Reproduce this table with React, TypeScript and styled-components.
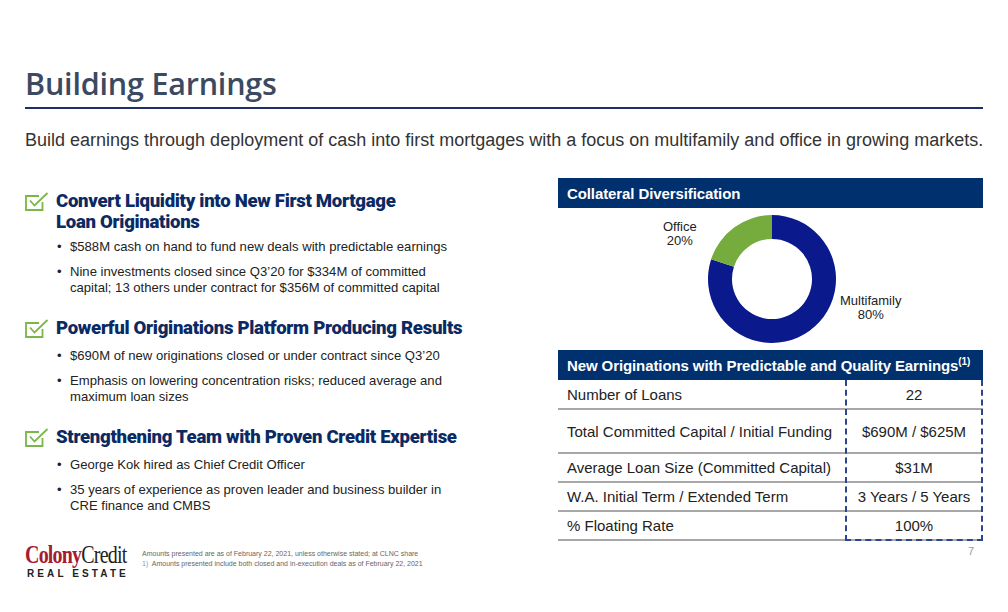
import React from "react";
import styled, { createGlobalStyle } from "styled-components";

const GlobalStyle = createGlobalStyle`
  html, body {
    margin: 0;
    padding: 0;
    background: #ffffff;
  }
  body {
    font-family: "Liberation Sans", Arial, sans-serif;
  }
`;

const NAVY = "#0b2a63";
const BAR = "#00306e";
const GREEN = "#7ab648";

const sections = [
  {
    title: ["Convert Liquidity into New First Mortgage", "Loan Originations"],
    bullets: [
      ["$588M cash on hand to fund new deals with predictable earnings"],
      [
        "Nine investments closed since Q3\u201920 for $334M of committed",
        "capital; 13 others under contract for $356M of committed capital",
      ],
    ],
  },
  {
    title: ["Powerful Originations Platform Producing Results"],
    bullets: [
      ["$690M of new originations closed or under contract since Q3\u201920"],
      [
        "Emphasis on lowering concentration risks; reduced average and",
        "maximum loan sizes",
      ],
    ],
  },
  {
    title: ["Strengthening Team with Proven Credit Expertise"],
    bullets: [
      ["George Kok hired as Chief Credit Officer"],
      [
        "35 years of experience as proven leader and business builder in",
        "CRE finance and CMBS",
      ],
    ],
  },
];

const rows = [
  { label: "Number of Loans", value: "22", height: 30 },
  { label: "Total Committed Capital / Initial Funding", value: "$690M / $625M", height: 44 },
  { label: "Average Loan Size (Committed Capital)", value: "$31M", height: 29 },
  { label: "W.A. Initial Term / Extended Term", value: "3 Years / 5 Years", height: 29 },
  { label: "% Floating Rate", value: "100%", height: 29 },
];

const CheckIcon = () => (
  <svg width="24" height="19" viewBox="0 0 24 19" fill="none">
    <path d="M14 4H1V18H17.5V10" stroke={GREEN} strokeWidth="1.8" />
    <path d="M5 8.5L9.5 13.5L22.5 1" stroke={GREEN} strokeWidth="1.8" />
  </svg>
);

// donut segment path
const arc = (cx: number, cy: number, r: number, ri: number, a0: number, a1: number) => {
  const p = (rad: number, a: number) => {
    const t = ((a - 90) * Math.PI) / 180;
    return `${cx + rad * Math.cos(t)} ${cy + rad * Math.sin(t)}`;
  };
  const large = Math.abs(a1 - a0) > 180 ? 1 : 0;
  return `M${p(r, a0)} A${r} ${r} 0 ${large} 1 ${p(r, a1)} L${p(ri, a1)} A${ri} ${ri} 0 ${large} 0 ${p(ri, a0)} Z`;
};

const Donut = () => (
  <svg width="130" height="130" viewBox="0 0 130 130">
    <path d={arc(65, 65, 64, 40, 0, 288)} fill="#0a1a8c" />
    <path d={arc(65, 65, 64, 40, 288, 360)} fill="#76ab3d" />
  </svg>
);

export default function App() {
  return (
    <>
      <GlobalStyle />
      <Slide>
        <Title>Building Earnings</Title>
        <Subtitle>
          Build earnings through deployment of cash into first mortgages with a focus on
          multifamily and office in growing markets.
        </Subtitle>
        <Body>
          <LeftColumn>
            {sections.map((s, i) => (
              <Section key={i}>
                <HeadingRow>
                  <IconBox>
                    <CheckIcon />
                  </IconBox>
                  <Heading>
                    {s.title.map((t, j) => (
                      <div key={j}>{t}</div>
                    ))}
                  </Heading>
                </HeadingRow>
                <BulletList>
                  {s.bullets.map((b, j) => (
                    <Bullet key={j}>
                      {b.map((line, k) => (
                        <div key={k}>{line}</div>
                      ))}
                    </Bullet>
                  ))}
                </BulletList>
              </Section>
            ))}
          </LeftColumn>
          <RightColumn>
            <PanelBar>Collateral Diversification</PanelBar>
            <ChartArea>
              <ChartLabel $side="left">
                Office
                <br />
                20%
              </ChartLabel>
              <DonutBox>
                <Donut />
              </DonutBox>
              <ChartLabel $side="right">
                Multifamily
                <br />
                80%
              </ChartLabel>
            </ChartArea>
            <PanelBar>
              New Originations with Predictable and Quality Earnings<Sup>(1)</Sup>
            </PanelBar>
            <Table>
              {rows.map((r) => (
                <Row key={r.label} $h={r.height}>
                  <LabelCell>{r.label}</LabelCell>
                  <ValueCell>{r.value}</ValueCell>
                </Row>
              ))}
              <DashedFrame />
            </Table>
          </RightColumn>
        </Body>
        <Footer>
          <Logo>
            <LogoWord>
              <Red>Colony</Red>Credit
            </LogoWord>
            <LogoSub>REAL ESTATE</LogoSub>
          </Logo>
          <Notes>
            <div>Amounts presented are as of February 22, 2021, unless otherwise stated; at CLNC share</div>
            <div>
              <NoteNum>1)</NoteNum> Amounts presented include both closed and in-execution deals as of
              February 22, 2021
            </div>
          </Notes>
          <PageNum>7</PageNum>
        </Footer>
      </Slide>
    </>
  );
}

const Slide = styled.div`
  width: 1008px;
  height: 612px;
  box-sizing: border-box;
  padding: 0 25px;
  overflow: hidden;
  display: flex;
  flex-direction: column;
  color: #222;
`;

const Title = styled.h1`
  margin: 63px 0 0;
  font-family: "Open Sans", "Liberation Sans", sans-serif;
  font-weight: 600;
  font-size: 30.5px;
  line-height: 40px;
  letter-spacing: -0.2px;
  color: #3b4a61;
  border-bottom: 2px solid #1f2f6b;
  padding-bottom: 4px;
  width: 958px;
`;

const Subtitle = styled.p`
  margin: 20px 0 0;
  font-size: 18px;
  line-height: 22px;
  color: #333;
  white-space: nowrap;
`;

const Body = styled.div`
  display: flex;
  justify-content: space-between;
  margin-top: 27px;
  width: 958px;
`;

const LeftColumn = styled.div`
  width: 520px;
  padding-top: 13px;
  display: flex;
  flex-direction: column;
  gap: 22px;
`;

const Section = styled.div`
  display: flex;
  flex-direction: column;
`;

const HeadingRow = styled.div`
  display: flex;
  align-items: flex-start;
`;

const IconBox = styled.div`
  width: 31px;
  padding-top: 1px;
`;

const Heading = styled.div`
  font-family: Roboto, "Liberation Sans", sans-serif;
  font-weight: 900;
  font-size: 18.6px;
  line-height: 21px;
  letter-spacing: -0.3px;
  color: ${NAVY};
`;

const BulletList = styled.ul`
  list-style: none;
  margin: 6px 0 0;
  padding: 0 0 0 31px;
  display: flex;
  flex-direction: column;
  gap: 9px;
`;

const Bullet = styled.li`
  position: relative;
  padding-left: 14px;
  font-size: 13.1px;
  line-height: 16px;
  color: #222;
  &::before {
    content: "\u2022";
    position: absolute;
    left: 1px;
    top: 0;
  }
`;

const RightColumn = styled.div`
  width: 425px;
  display: flex;
  flex-direction: column;
`;

const PanelBar = styled.div`
  height: 30px;
  background: ${BAR};
  color: #fff;
  font-weight: 700;
  font-size: 15px;
  display: flex;
  align-items: center;
  padding-left: 9px;
  letter-spacing: -0.1px;
`;

const Sup = styled.span`
  font-size: 10px;
  align-self: flex-start;
  margin-top: 6px;
`;

const ChartArea = styled.div`
  position: relative;
  height: 142px;
  display: flex;
  justify-content: center;
  padding-top: 6px;
  box-sizing: border-box;
`;

const DonutBox = styled.div`
  width: 130px;
  height: 130px;
  margin-left: 2px;
`;

const ChartLabel = styled.div<{ $side: "left" | "right" }>`
  position: absolute;
  text-align: center;
  font-size: 13px;
  line-height: 14px;
  color: #222;
  ${(p) => (p.$side === "left" ? "left: 105px; top: 12px;" : "left: 282px; top: 86px;")}
`;

const Table = styled.div`
  position: relative;
  display: flex;
  flex-direction: column;
`;

const Row = styled.div<{ $h: number }>`
  height: ${(p) => p.$h}px;
  display: flex;
  align-items: center;
  border-bottom: 2px solid #a8a8a8;
  box-sizing: border-box;
  font-size: 15px;
  color: #222;
`;

const LabelCell = styled.div`
  width: 287px;
  padding-left: 9px;
  box-sizing: border-box;
`;

const ValueCell = styled.div`
  flex: 1;
  text-align: center;
`;

const DashedFrame = styled.div`
  position: absolute;
  left: 287px;
  right: 0;
  top: 0;
  bottom: 0;
  border: 2px dashed #2b4590;
  border-top: none;
  pointer-events: none;
`;

const Footer = styled.div`
  display: flex;
  align-items: flex-start;
  width: 958px;
  margin-top: auto;
  margin-bottom: 33px;
`;

const PageNum = styled.div`
  margin-left: auto;
  margin-right: 9px;
  padding-top: 2px;
  font-size: 11px;
  color: #999;
`;

const Logo = styled.div`
  display: flex;
  flex-direction: column;
  width: 117px;
  flex-shrink: 0;
`;

const LogoWord = styled.div`
  font-family: "Liberation Serif", "Times New Roman", serif;
  font-size: 25px;
  line-height: 24px;
  letter-spacing: -1px;
  color: #222;
  white-space: nowrap;
  transform: scaleX(0.8);
  transform-origin: left center;
`;

const Red = styled.span`
  color: #a51c30;
  font-weight: 700;
`;

const LogoSub = styled.div`
  font-family: "Liberation Sans", Arial, sans-serif;
  font-weight: 700;
  font-size: 10px;
  letter-spacing: 3.1px;
  color: #222;
  margin-top: 1px;
  padding-left: 2px;
  white-space: nowrap;
`;

const Notes = styled.div`
  font-size: 7px;
  line-height: 10px;
  color: #666;
  padding-top: 6px;
`;

const NoteNum = styled.span`
  color: #8a9ab8;
  margin-right: 2px;
`;
